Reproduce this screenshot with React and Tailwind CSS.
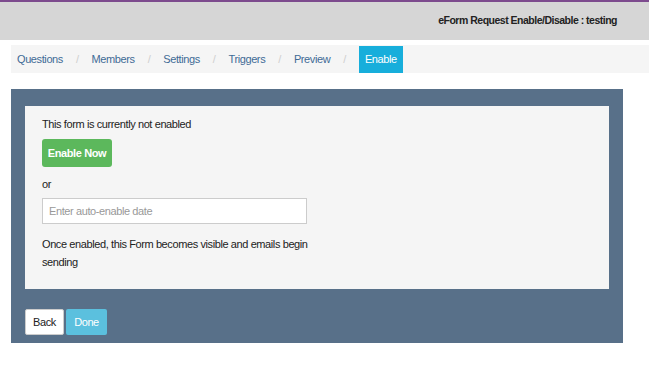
import React from "react";

const tabs = ["Questions", "Members", "Settings", "Triggers", "Preview"];

function App() {
  return (
    <div className="w-[649px] h-[376px] bg-white font-['Liberation_Sans',Arial,sans-serif] text-[11px] tracking-[-0.4px] text-[#333] overflow-hidden">
      {/* header */}
      <div className="h-[2px] bg-[#7d4b8e]" />
      <div className="h-[38px] bg-[#d6d6d6] flex items-center justify-end pr-[32px]">
        <span className="font-bold text-[#222] text-[10.5px] tracking-[-0.5px]">eForm Request Enable/Disable : testing</span>
      </div>

      {/* breadcrumb tabs */}
      <div className="mt-[5px] ml-[11px] h-[28px] bg-[#f5f5f5] flex items-stretch pl-[6px]">
        {tabs.map((t) => (
          <div key={t} className="flex items-center">
            <a className="text-[#3f6b95]">{t}</a>
            <span className="px-[13px] text-[#cfcfcf]">/</span>
          </div>
        ))}
        <div className="mt-[1px] px-[6px] bg-[#17aedb] text-white flex items-center">Enable</div>
      </div>

      {/* panel */}
      <div className="mt-[16px] ml-[11px] w-[612px] bg-[#587089] pt-[17px] px-[14px] pb-[8px]">
        <div className="h-[183px] bg-[#f5f5f5] pl-[17px] pt-[11px]">
          <p className="leading-[14px] text-[#222]">This form is currently not enabled</p>
          <button className="mt-[8px] block w-[70px] h-[28px] rounded-[3px] bg-[#5cb85c] text-white font-bold">
            Enable Now
          </button>
          <p className="mt-[11px] leading-[12px] text-[#222]">or</p>
          <input
            className="mt-[8px] block w-[265px] h-[26px] border border-[#cccccc] bg-white px-[6px] outline-none placeholder:text-[#999]"
            placeholder="Enter auto-enable date"
          />
          <p className="mt-[11px] w-[270px] leading-[18px] text-[#222]">
            Once enabled, this Form becomes visible and emails begin sending
          </p>
        </div>
        <div className="mt-[20px] flex gap-[2px]">
          <button className="w-[39px] h-[26px] bg-white border border-[#ccc] rounded-[2px] text-[#222]">Back</button>
          <button className="w-[41px] h-[26px] bg-[#5bc0de] rounded-[2px] text-white">Done</button>
        </div>
      </div>
    </div>
  );
}

export default App;
